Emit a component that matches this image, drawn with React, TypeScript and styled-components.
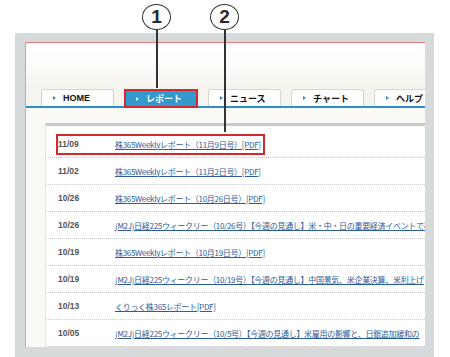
import React from "react";
import styled, { createGlobalStyle } from "styled-components";

const GlobalStyle = createGlobalStyle`
  html, body {
    margin: 0;
    padding: 0;
    background: #ffffff;
  }
  body {
    font-family: "Liberation Sans", "Noto Sans CJK JP", sans-serif;
  }
`;

const Page = styled.div`
  position: relative;
  width: 450px;
  height: 357px;
  overflow: hidden;
  background: #ffffff;
  padding: 33px 0 0 15px;
  box-sizing: border-box;
`;

const Frame = styled.div`
  width: 419px;
  height: 324px;
  box-sizing: border-box;
  padding: 9px 9px 10px 10px;
  background: #d6dadb;
`;

const Screen = styled.div`
  display: flex;
  flex-direction: column;
  height: 100%;
  box-sizing: border-box;
  border-top: 1px solid #e47c7c;
  border-left: 1px solid #e49a9a;
  background: #faf9f6;
  overflow: hidden;
`;

const Header = styled.div`
  height: 45px;
  background: linear-gradient(#ffffff 0%, #fdfcfa 50%, #f6f4ef 100%);
`;

const TabBar = styled.div`
  display: flex;
  align-items: flex-end;
  gap: 10px;
  height: 18px;
  padding-left: 15px;
  background: #f6f4ef;
  border-bottom: 2px solid #2b8fca;
  box-shadow: 0 1px 0 #bcdcef;
`;

const Tab = styled.div<{ $active?: boolean }>`
  display: flex;
  align-items: center;
  gap: 7px;
  flex: 0 0 auto;
  box-sizing: border-box;
  width: ${(p) => (p.$active ? "74px" : "73px")};
  height: ${(p) => (p.$active ? "19px" : "17px")};
  padding-left: ${(p) => (p.$active ? "10px" : "11px")};
  border: ${(p) => (p.$active ? "2px solid #d3292b" : "1px solid #d4d4d4")};
  border-bottom: ${(p) => (p.$active ? "2px solid #d3292b" : "none")};
  margin-bottom: ${(p) => (p.$active ? "-2px" : "0")};
  border-radius: ${(p) => (p.$active ? "0" : "3px 3px 0 0")};
  background: ${(p) => (p.$active ? "#3398cd" : "#ffffff")};
  color: ${(p) => (p.$active ? "#ffffff" : "#111111")};
  font-family: "Liberation Sans", "Noto Sans CJK JP", sans-serif;
  font-size: 9px;
  font-weight: bold;
  white-space: nowrap;
  position: relative;
  z-index: 1;
`;

const Bullet = styled.span<{ $light?: boolean }>`
  width: 0;
  height: 0;
  border-top: 2px solid transparent;
  border-bottom: 2px solid transparent;
  border-left: 3px solid ${(p) => (p.$light ? "#d8ecf7" : "#2b8fca")};
`;

const Body = styled.div`
  flex: 1;
  padding: 15px 0 0 19px;
  background: #faf9f6;
`;

const Panel = styled.div`
  height: 100%;
  padding-top: 5px;
  background: #ffffff;
  border-left: 1px solid #e2e2e2;
  border-top: 3px solid #cacaca;
`;

const Row = styled.div`
  display: flex;
  align-items: center;
  height: 27px;
  box-sizing: border-box;
  border-bottom: 1px dotted #c8c8c8;
  white-space: nowrap;
  overflow: hidden;
`;

const RowInner = styled.div<{ $marked?: boolean }>`
  display: flex;
  align-items: center;
  height: 17px;
  margin-left: 10px;
  padding-right: 2px;
  border: 2px solid ${(p) => (p.$marked ? "#d3292b" : "transparent")};
`;

const DateCell = styled.span`
  width: 57px;
  font-family: "Liberation Sans", sans-serif;
  font-size: 8.5px;
  font-weight: bold;
  color: #555555;
`;

const Link = styled.a`
  font-family: "Noto Sans CJK JP", sans-serif;
  font-size: 8px;
  letter-spacing: -0.3px;
  color: #2c5c9c;
  text-decoration: underline;
`;

const Marker = styled.div<{ $x: number }>`
  position: absolute;
  top: 4px;
  left: ${(p) => p.$x - 15}px;
  width: 29px;
  height: 26px;
  box-sizing: border-box;
  border: 1.5px solid #333333;
  border-radius: 50%;
  display: flex;
  align-items: center;
  justify-content: center;
  font-family: "Liberation Sans", sans-serif;
  font-size: 19px;
  font-weight: bold;
  color: #2a2a2a;
  background: #ffffff;
  z-index: 3;
`;

const Leader = styled.div<{ $x: number; $end: number }>`
  position: absolute;
  top: 30px;
  left: ${(p) => p.$x - 1}px;
  width: 2px;
  height: ${(p) => p.$end - 30}px;
  background: #333333;
  z-index: 3;
`;

const tabs = [
  { label: "HOME" },
  { label: "レポート", active: true },
  { label: "ニュース" },
  { label: "チャート" },
  { label: "ヘルプ" },
];

const reports = [
  { date: "11/09", title: "株365Weeklyレポート（11月9日号）[PDF]", marked: true },
  { date: "11/02", title: "株365Weeklyレポート（11月2日号）[PDF]" },
  { date: "10/26", title: "株365Weeklyレポート（10月26日号）[PDF]" },
  { date: "10/26", title: "(M2J)日経225ウィークリー（10/26号）【今週の見通し】米・中・日の重要経済イベントで株価は" },
  { date: "10/19", title: "株365Weeklyレポート（10月19日号）[PDF]" },
  { date: "10/19", title: "(M2J)日経225ウィークリー（10/19号）【今週の見通し】中国景気、米企業決算、米利上げ" },
  { date: "10/13", title: "くりっく株365レポート[PDF]" },
  { date: "10/05", title: "(M2J)日経225ウィークリー（10/5号）【今週の見通し】米雇用の影響と、日銀追加緩和の" },
];

export default function App() {
  return (
    <>
      <GlobalStyle />
      <Page>
        <Marker $x={157}>1</Marker>
        <Leader $x={157} $end={88} />
        <Marker $x={225}>2</Marker>
        <Leader $x={225} $end={132} />
        <Frame>
          <Screen>
            <Header />
            <TabBar>
              {tabs.map((t) => (
                <Tab key={t.label} $active={t.active}>
                  <Bullet $light={t.active} />
                  {t.label}
                </Tab>
              ))}
            </TabBar>
            <Body>
              <Panel>
                {reports.map((r, i) => (
                  <Row key={i}>
                    <RowInner $marked={r.marked}>
                      <DateCell>{r.date}</DateCell>
                      <Link href="#">{r.title}</Link>
                    </RowInner>
                  </Row>
                ))}
              </Panel>
            </Body>
          </Screen>
        </Frame>
      </Page>
    </>
  );
}
